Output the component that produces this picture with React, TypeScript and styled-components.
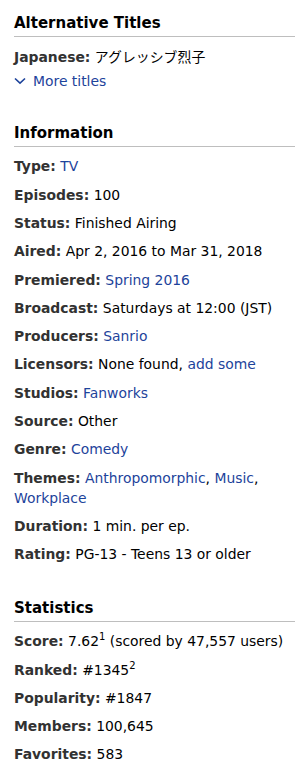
import React from "react";
import styled, { createGlobalStyle } from "styled-components";

const GlobalStyle = createGlobalStyle`
  html, body {
    margin: 0;
    padding: 0;
    background: #ffffff;
  }
  body {
    font-family: "DejaVu Sans", Verdana, "Noto Sans CJK JP", sans-serif;
    font-size: 13.9px;
    color: #000000;
  }
`;

const Sidebar = styled.div`
  width: 281px;
  padding: 14px 2px 14px 14px;
`;

const Section = styled.div<{ $gap?: number }>`
  margin-top: ${(p) => p.$gap ?? 0}px;
`;

const Heading = styled.h2`
  margin: 0 0 5px;
  padding: 0 0 4px;
  font-size: 15px;
  line-height: 18px;
  font-weight: bold;
  color: #000000;
  border-bottom: 1px solid #bebebe;
`;

const Row = styled.div`
  padding: 4.15px 0;
  line-height: 20px;
  color: #000000;
`;

const Label = styled.span`
  font-weight: bold;
  color: #323232;
`;

const Jp = styled.span`
  font-family: "Noto Sans CJK JP", sans-serif;
`;

const A = styled.a`
  color: #1d439b;
  text-decoration: none;
  cursor: pointer;
`;

const MoreLink = styled.a`
  display: flex;
  align-items: center;
  gap: 7px;
  padding: 0 0 4px;
  line-height: 20px;
  color: #1d439b;
  text-decoration: none;
  cursor: pointer;
`;

const Sup = styled.sup`
  font-size: 10px;
  line-height: 0;
  vertical-align: 6px;
`;

const Chevron = () => (
  <svg width="12" height="8" viewBox="0 0 12 8" fill="none">
    <path d="M1 1.5 L6 6.2 L11 1.5" stroke="#1d439b" strokeWidth="1.6" />
  </svg>
);

type Item = { label: string; value: React.ReactNode };

const info: Item[] = [
  { label: "Type", value: <A>TV</A> },
  { label: "Episodes", value: "100" },
  { label: "Status", value: "Finished Airing" },
  { label: "Aired", value: "Apr 2, 2016 to Mar 31, 2018" },
  { label: "Premiered", value: <A>Spring 2016</A> },
  { label: "Broadcast", value: "Saturdays at 12:00 (JST)" },
  { label: "Producers", value: <A>Sanrio</A> },
  {
    label: "Licensors",
    value: (
      <>
        None found, <A>add some</A>
      </>
    ),
  },
  { label: "Studios", value: <A>Fanworks</A> },
  { label: "Source", value: "Other" },
  { label: "Genre", value: <A>Comedy</A> },
  {
    label: "Themes",
    value: (
      <>
        <A>Anthropomorphic</A>, <A>Music</A>, <A>Workplace</A>
      </>
    ),
  },
  { label: "Duration", value: "1 min. per ep." },
  { label: "Rating", value: "PG-13 - Teens 13 or older" },
];

const stats: Item[] = [
  {
    label: "Score",
    value: (
      <>
        7.62<Sup>1</Sup> (scored by 47,557 users)
      </>
    ),
  },
  {
    label: "Ranked",
    value: (
      <>
        #1345<Sup>2</Sup>
      </>
    ),
  },
  { label: "Popularity", value: "#1847" },
  { label: "Members", value: "100,645" },
  { label: "Favorites", value: "583" },
];

const renderRows = (items: Item[]) =>
  items.map((it) => (
    <Row key={it.label}>
      <Label>{it.label}:</Label> {it.value}
    </Row>
  ));

export default function App() {
  return (
    <>
      <GlobalStyle />
      <Sidebar>
        <Section>
          <Heading>Alternative Titles</Heading>
          <Row>
            <Label>Japanese:</Label> <Jp>アグレッシブ烈子</Jp>
          </Row>
          <MoreLink>
            <Chevron />
            More titles
          </MoreLink>
        </Section>
        <Section $gap={29}>
          <Heading>Information</Heading>
          {renderRows(info)}
        </Section>
        <Section $gap={31}>
          <Heading>Statistics</Heading>
          {renderRows(stats)}
        </Section>
      </Sidebar>
    </>
  );
}
